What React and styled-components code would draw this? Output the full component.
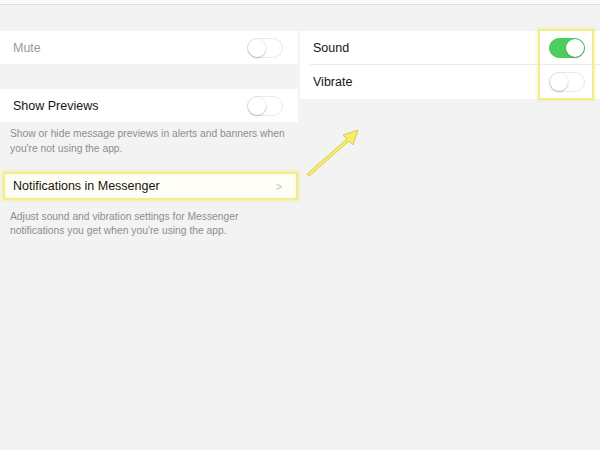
import React from 'react';
import styled, { createGlobalStyle } from 'styled-components';

const GlobalStyle = createGlobalStyle`
  html, body {
    margin: 0;
    padding: 0;
    background: #f3f3f3;
  }
  body {
    font-family: "Liberation Sans", Arial, sans-serif;
    -webkit-font-smoothing: antialiased;
  }
`;

const Page = styled.div`
  position: relative;
  width: 600px;
  height: 450px;
  overflow: hidden;
  background: #f3f3f3;
`;

const TopBar = styled.div`
  height: 4px;
  background: #fbfbfb;
  border-bottom: 1px solid #dedede;
`;

const Split = styled.div`
  display: grid;
  grid-template-columns: 298px 1fr;
  column-gap: 2px;
`;

const Pane = styled.div`
  display: flex;
  flex-direction: column;
  padding-top: ${({ $top }) => $top || 26}px;
`;

const Group = styled.div`
  position: relative;
  display: flex;
  flex-direction: column;
  background: #fff;
  margin-bottom: ${({ $gap }) => $gap || 0}px;
`;

const Row = styled.div`
  display: flex;
  align-items: center;
  justify-content: space-between;
  height: ${({ $h }) => $h || 33}px;
  padding: 0 15px 0 13px;
  background: #fff;
  box-sizing: border-box;
  & + & {
    background: linear-gradient(#ebebeb, #ebebeb) 10px 0 / calc(100% - 10px) 1px no-repeat, #fff;
  }
`;

const Label = styled.span`
  font-size: 12.5px;
  color: ${({ $muted }) => ($muted ? '#9a9a9a' : '#141414')};
`;

const Footnote = styled.p`
  margin: 0;
  padding: ${({ $pad }) => $pad || '5px 0 0 10px'};
  font-size: 10.3px;
  line-height: ${({ $lh }) => $lh || 14.5}px;
  color: #8d8d92;
  height: ${({ $h }) => $h}px;
  box-sizing: border-box;
`;

const NavRow = styled(Row)`
  height: 28px;
  margin-left: 3px;
  padding: 0 13px 0 8px;
  background: #fffef6;
  border: 2px solid #f1ec8e;
  box-shadow: 0 0 3px 1px rgba(240, 233, 120, 0.55), inset 0 0 2px rgba(240, 233, 120, 0.6);
`;

const Chevron = styled.span`
  font-size: 13px;
  color: #c3c3c8;
  transform: scaleX(0.8);
`;

const Track = styled.span`
  position: relative;
  display: inline-block;
  width: 36px;
  height: 20px;
  border-radius: 10px;
  box-sizing: border-box;
  background: ${({ $on }) => ($on ? '#4bcd60' : '#fff')};
  border: 1px solid ${({ $on }) => ($on ? '#4bcd60' : '#e8e8e8')};
`;

const Knob = styled.span`
  position: absolute;
  top: 0;
  left: ${({ $on }) => ($on ? '16px' : '0')};
  width: 18px;
  height: 18px;
  border-radius: 50%;
  background: #fff;
  box-shadow: 0 1px 2px rgba(0, 0, 0, 0.22), 0 0 0 0.5px rgba(0, 0, 0, 0.06);
`;

const Highlight = styled.div`
  position: absolute;
  top: -2px;
  right: 6px;
  width: 56px;
  height: 71px;
  box-sizing: border-box;
  border: 2px solid #f2ed8c;
  box-shadow: 0 0 3px 1px rgba(240, 233, 120, 0.5);
  pointer-events: none;
`;

const ArrowLayer = styled.svg`
  position: absolute;
  left: 300px;
  top: 124px;
  overflow: visible;
`;

const Toggle = ({ on }) => (
  <Track $on={on}>
    <Knob $on={on} />
  </Track>
);

const Arrow = () => (
  <ArrowLayer width="64" height="56" viewBox="0 0 64 56">
    <path
      d="M7 50 L47 15 L43 11 L58 6 L53 21 L49 17 L9 52 Z"
      fill="#f4ee6c"
      stroke="#d9cf4a"
      strokeWidth="1"
      strokeLinejoin="round"
    />
  </ArrowLayer>
);

export default function App() {
  return (
    <Page>
      <GlobalStyle />
      <TopBar />
      <Split>
        <Pane>
          <Group $gap={25}>
            <Row>
              <Label $muted>Mute</Label>
              <Toggle />
            </Row>
          </Group>
          <Group>
            <Row>
              <Label>Show Previews</Label>
              <Toggle />
            </Row>
          </Group>
          <Footnote $h={50}>
            Show or hide message previews in alerts and banners when you're not using the app.
          </Footnote>
          <NavRow>
            <Label>Notifications in Messenger</Label>
            <Chevron>&gt;</Chevron>
          </NavRow>
          <Footnote $pad="10px 40px 0 10px" $lh={13.5}>
            Adjust sound and vibration settings for Messenger notifications you get when you're using the app.
          </Footnote>
        </Pane>
        <Pane>
          <Group>
            <Row>
              <Label>Sound</Label>
              <Toggle on />
            </Row>
            <Row $h={35}>
              <Label>Vibrate</Label>
              <Toggle />
            </Row>
            <Highlight />
          </Group>
        </Pane>
      </Split>
      <Arrow />
    </Page>
  );
}
